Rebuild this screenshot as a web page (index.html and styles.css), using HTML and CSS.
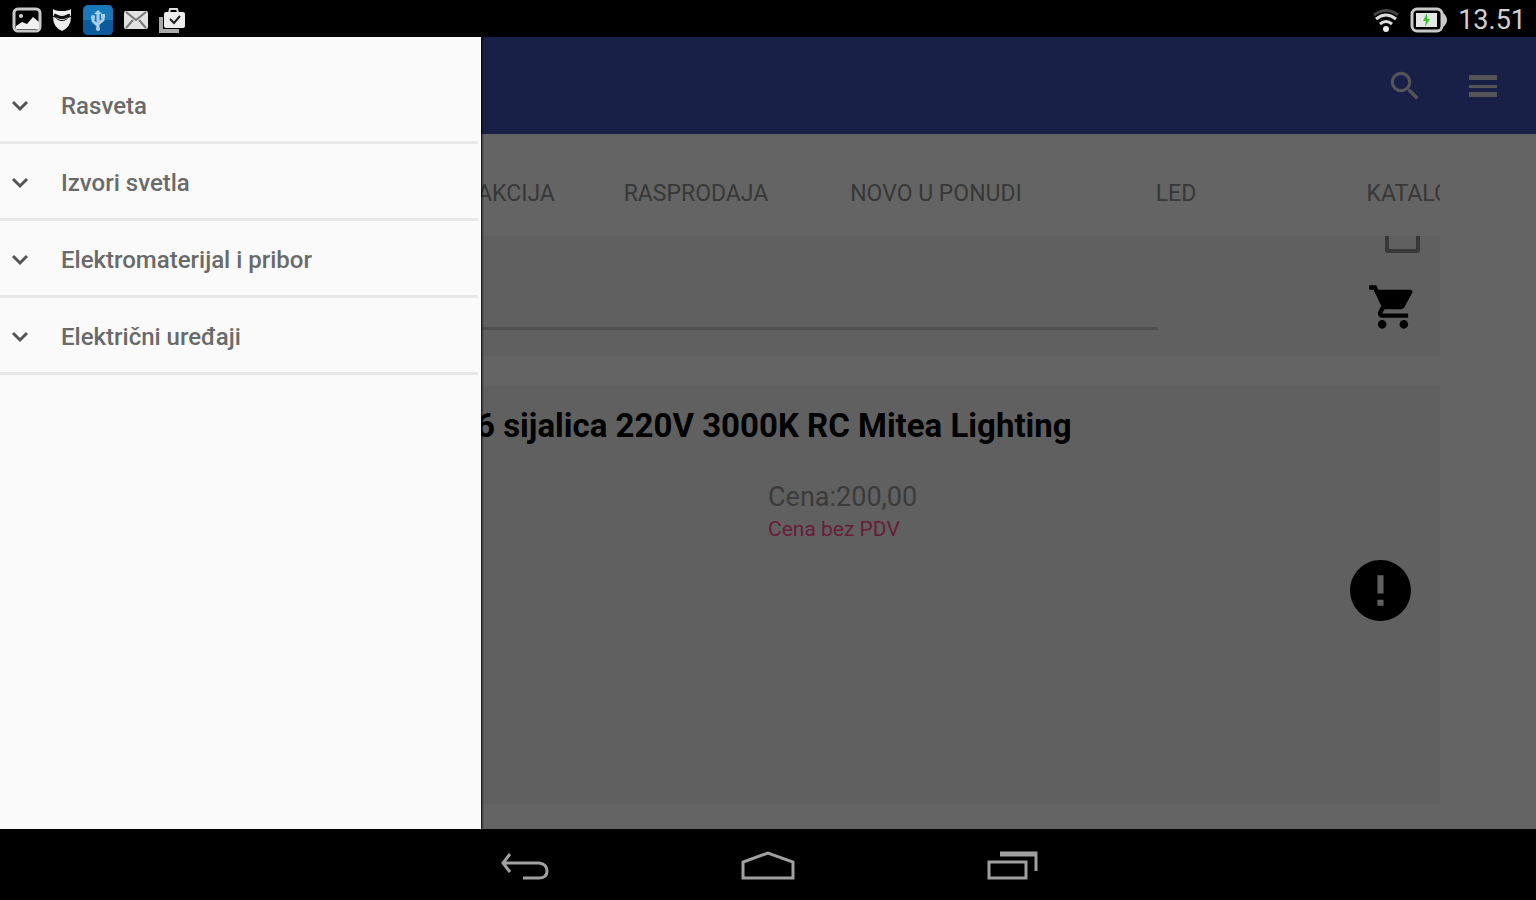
FILE: index.html
```html
<!DOCTYPE html>
<html lang="sr-Latn">
<head>
  <meta charset="UTF-8">
  <meta name="viewport" content="width=device-width, initial-scale=1.0">
  <title>Rasveta</title>
  <link rel="stylesheet" href="styles.css">
</head>
<body>
  <div class="status-bar">
    <div class="status-icons">
      <svg width="30" height="26" viewBox="0 0 30 26">
        <rect x="2" y="2" width="26" height="22" rx="4" fill="#000" stroke="#c8c8c8" stroke-width="3"/>
        <circle cx="9" cy="9" r="2" fill="#d4d4d4"/>
        <path d="M4 22v-3l6-4 5 2 6-7 6 5v7z" fill="#f0f0f0"/>
      </svg>
      <svg width="22" height="26" viewBox="0 0 22 26">
        <path d="M2 2q3 2 9 2t9-2v7q-3 1-5 3-4 2-8 0-2-2-5-3z" fill="#eee"/>
        <path d="M2 10q3 0 5 3 4 2 8 0 2-3 5-3 0 10-9 14Q2 20 2 10z" fill="#eee"/>
        <path d="M3 8l5 2q3 1 6 0l5-2" fill="none" stroke="#111" stroke-width="3"/>
      </svg>
      <svg width="32" height="32" viewBox="0 0 32 32">
        <rect x="1" y="1" width="30" height="30" rx="5" fill="#1878ba"/>
        <path d="M1 16h30v10a5 5 0 0 1-5 5H6a5 5 0 0 1-5-5z" fill="#0a5a9c"/>
        <path d="M16 25V9M16 22l-5-5v-3M16 20l5-4v-3" fill="none" stroke="#a8cfe8" stroke-width="3"/>
        <path d="M12 10l4-4 4 4z" fill="#a8cfe8"/>
        <circle cx="11" cy="13" r="2" fill="#a8cfe8"/>
        <path d="M19 10h4v4h-4z" fill="#a8cfe8"/>
        <circle cx="16" cy="25" r="2" fill="#a8cfe8"/>
      </svg>
      <svg width="26" height="24" viewBox="0 0 26 24">
        <rect x="1" y="3" width="24" height="18" rx="2" fill="#e2e2e2"/>
        <path d="M3 4l10 8 10-8M3 20l7-8M23 20l-7-8" fill="none" stroke="#777" stroke-width="2"/>
      </svg>
      <svg width="28" height="28" viewBox="0 0 28 28">
        <path d="M3 11v14h18" fill="none" stroke="#aaa" stroke-width="4"/>
        <path d="M11 7l1-4h7l1 4" fill="none" stroke="#ddd" stroke-width="2"/>
        <rect x="6" y="6" width="21" height="16" rx="2" fill="#eee"/>
        <path d="M12 13l4 4 6-7" fill="none" stroke="#222" stroke-width="2"/>
      </svg>
    </div>
    <div class="status-info">
      <svg width="28" height="26" viewBox="0 0 28 26">
        <path d="M2 8q12-9 24 0" fill="none" stroke="#444" stroke-width="3"/>
        <path d="M4 12q10-8 20 0" fill="none" stroke="#ddd" stroke-width="3"/>
        <path d="M8 17q6-5 12 0" fill="none" stroke="#ddd" stroke-width="3"/>
        <circle cx="14" cy="22" r="3" fill="#eee"/>
      </svg>
      <svg width="38" height="26" viewBox="0 0 38 26">
        <rect x="2" y="2" width="30" height="22" rx="5" fill="#000" stroke="#c8c8c8" stroke-width="3"/>
        <path d="M33 6q4 3 4 7t-4 7z" fill="#c8c8c8"/>
        <rect x="6" y="6" width="21" height="14" fill="#e6e6e6"/>
        <path d="M17 6l-4 8h3l-1 6 5-8h-3z" fill="#2fc52f"/>
      </svg>
      <span class="clock">13.51</span>
    </div>
  </div>

  <div class="screen">
    <div class="app">
      <header class="app-bar">
        <button type="button" class="icon-button" aria-label="Pretraga">
          <svg width="38" height="38" viewBox="0 0 24 24" fill="currentColor"><path d="M15.5 14h-.79l-.28-.27A6.47 6.47 0 0 0 16 9.5 6.5 6.5 0 1 0 9.5 16c1.61 0 3.09-.59 4.23-1.57l.27.28v.79l5 4.99L20.49 19l-4.99-5zm-6 0C7.01 14 5 11.99 5 9.5S7.01 5 9.5 5 14 7.01 14 9.5 11.99 14 9.5 14z"/></svg>
        </button>
        <button type="button" class="icon-button" aria-label="Meni">
          <svg width="38" height="38" viewBox="0 0 38 38" fill="currentColor"><path d="M5 8h28v5H5zM5 18h28v3H5zM5 25h28v5H5z"/></svg>
        </button>
      </header>

      <main class="content">
        <nav class="tabs">
          <a href="#" class="tab tab-short">AKCIJA</a>
          <a href="#" class="tab">RASPRODAJA</a>
          <a href="#" class="tab">NOVO U PONUDI</a>
          <a href="#" class="tab">LED</a>
          <a href="#" class="tab">KATALOG</a>
        </nav>

        <section class="card card-order">
          <input type="text" class="quantity" aria-label="Količina">
          <div class="card-actions">
            <input type="checkbox" class="check" aria-label="Izaberi">
            <button type="button" class="icon-button" aria-label="Korpa">
              <svg width="54" height="52" viewBox="0 0 24 24" fill="currentColor"><path d="M7 18c-1.1 0-1.99.9-1.99 2S5.9 22 7 22s2-.9 2-2-.9-2-2-2zM1 2v2h2l3.6 7.59-1.35 2.45c-.16.28-.25.61-.25.96 0 1.1.9 2 2 2h12v-2H7.42c-.14 0-.25-.11-.25-.25l.03-.12.9-1.63h7.45c.75 0 1.41-.41 1.75-1.03l3.58-6.49A1 1 0 0 0 20 4H5.21l-.94-2H1zm16 16c-1.1 0-1.99.9-1.99 2s.89 2 1.99 2 2-.9 2-2-.9-2-2-2z"/></svg>
            </button>
          </div>
        </section>

        <section class="card card-product">
          <h2 class="product-name">6 sijalica 220V 3000K RC Mitea Lighting</h2>
          <div class="price">
            <div class="price-value">Cena:200,00</div>
            <div class="price-note">Cena bez PDV</div>
          </div>
          <button type="button" class="icon-button info" aria-label="Detalji">
            <svg width="73" height="73" viewBox="0 0 24 24" fill="currentColor"><path d="M12 2C6.48 2 2 6.48 2 12s4.48 10 10 10 10-4.48 10-10S17.52 2 12 2zm1 15h-2v-2h2v2zm0-4h-2V7h2v6z"/></svg>
          </button>
        </section>
      </main>
    </div>

    <div class="scrim"></div>

    <aside class="drawer">
      <button type="button" class="drawer-item">
        <svg class="chevron" viewBox="0 0 20 20"><path d="M3 6l7 7 7-7"/></svg>Rasveta
      </button>
      <button type="button" class="drawer-item">
        <svg class="chevron" viewBox="0 0 20 20"><path d="M3 6l7 7 7-7"/></svg>Izvori svetla
      </button>
      <button type="button" class="drawer-item">
        <svg class="chevron" viewBox="0 0 20 20"><path d="M3 6l7 7 7-7"/></svg>Elektromaterijal i pribor
      </button>
      <button type="button" class="drawer-item">
        <svg class="chevron" viewBox="0 0 20 20"><path d="M3 6l7 7 7-7"/></svg>Električni uređaji
      </button>
    </aside>
  </div>

  <div class="nav-bar">
    <button type="button" class="nav-button" aria-label="Nazad">
      <svg width="56" height="36" viewBox="0 0 56 36"><path d="M14 6L7 15l7 9M7 15h36q8 1 8 8t-8 7H27"/></svg>
    </button>
    <button type="button" class="nav-button" aria-label="Početni ekran">
      <svg width="56" height="36" viewBox="0 0 56 36"><path d="M3 30V14L28 5l25 9v16z"/></svg>
    </button>
    <button type="button" class="nav-button" aria-label="Nedavne aplikacije">
      <svg width="56" height="36" viewBox="0 0 56 36"><path d="M5 14h37v16H5zM16 5h36v18"/><path d="M16 7h36"/></svg>
    </button>
  </div>
</body>
</html>
```

FILE: styles.css
```css
* {
  box-sizing: border-box;
}

body {
  margin: 0;
  min-height: 100vh;
  display: flex;
  flex-direction: column;
  background: #000;
  font-family: Roboto, "Noto Sans", sans-serif;
}

button {
  padding: 0;
  border: none;
  background: none;
  font: inherit;
  cursor: pointer;
}

svg {
  display: block;
}

/* Android status bar */
.status-bar {
  height: 37px;
  padding: 3px 10px 0 12px;
  display: flex;
  justify-content: space-between;
  align-items: center;
}

.status-icons {
  display: flex;
  align-items: center;
  gap: 9px;
}

.status-info {
  display: flex;
  align-items: center;
  gap: 10px;
}

.clock {
  color: #d0d0d0;
  font-size: 27px;
  line-height: 32px;
}

/* App window */
.screen {
  flex: 1;
  display: flex;
  position: relative;
  overflow: hidden;
}

.app {
  flex: 1;
  min-width: 0;
  display: flex;
  flex-direction: column;
  background: #fafafa;
}

.app-bar {
  height: 97px;
  padding: 0 34px;
  display: flex;
  justify-content: flex-end;
  align-items: center;
  gap: 40px;
  background: #3f51b5;
}

.icon-button {
  color: #000;
}

.app-bar .icon-button {
  color: #d4d4dc;
}

.content {
  flex: 1;
  margin: 0 96px;
  padding-bottom: 25px;
  display: flex;
  flex-direction: column;
}

.tabs {
  height: 102px;
  padding: 0 0 0 360px;
  display: flex;
  overflow: hidden;
}

.tab {
  flex: 0 0 240px;
  padding-top: 46px;
  color: #8c8c8c;
  font-size: 23px;
  line-height: 28px;
  text-align: center;
  text-decoration: none;
}

.tab-short {
  flex-basis: 120px;
}

.card {
  background: #f0f0f0;
}

.card-order {
  height: 120px;
  margin-bottom: 30px;
  display: flex;
  justify-content: space-between;
  overflow: hidden;
}

.quantity {
  width: 79%;
  height: 94px;
  border: none;
  border-bottom: 3px solid #c8c8c8;
  background: none;
  font-size: 24px;
}

.card-actions {
  padding-right: 20px;
  display: flex;
  flex-direction: column;
  align-items: flex-end;
  gap: 28px;
}

.check {
  width: 35px;
  height: 35px;
  margin: -18px 0 0;
  appearance: none;
  border: 4px solid #8c8c8c;
  border-radius: 3px;
}

.card-product {
  flex: 1;
  padding: 20px 23px 0 380px;
}

.product-name {
  margin: 0;
  font-size: 33px;
  line-height: 40px;
  white-space: nowrap;
}

.price {
  margin: 34px 0 0 292px;
}

.price-value {
  color: #949494;
  font-size: 27px;
  line-height: 34px;
}

.price-note {
  color: #ff4f90;
  font-size: 21px;
  line-height: 30px;
}

.info {
  display: block;
  margin: 10px 0 0 auto;
}

.scrim {
  position: absolute;
  inset: 0;
  background: rgba(0, 0, 0, 0.6);
}

/* Category drawer */
.drawer {
  position: absolute;
  top: 0;
  bottom: 0;
  left: 0;
  width: 481px;
  padding: 30px 3px 0 0;
  background: #fafafa;
  box-shadow: 1px 0 2px #000;
}

.drawer-item {
  width: 100%;
  height: 77px;
  padding: 4px 0 0 10px;
  display: flex;
  align-items: center;
  gap: 31px;
  border-bottom: 3px solid #e8e8e8;
  color: #6a6a6a;
  font-size: 24px;
  font-weight: 500;
}

.chevron {
  width: 20px;
  height: 20px;
  fill: none;
  stroke: #555;
  stroke-width: 3;
}

/* Android navigation bar */
.nav-bar {
  height: 71px;
  padding-top: 3px;
  display: flex;
  justify-content: center;
  align-items: center;
  gap: 188px;
}

.nav-button svg {
  fill: none;
  stroke: #a0a0a0;
  stroke-width: 3;
}
```
